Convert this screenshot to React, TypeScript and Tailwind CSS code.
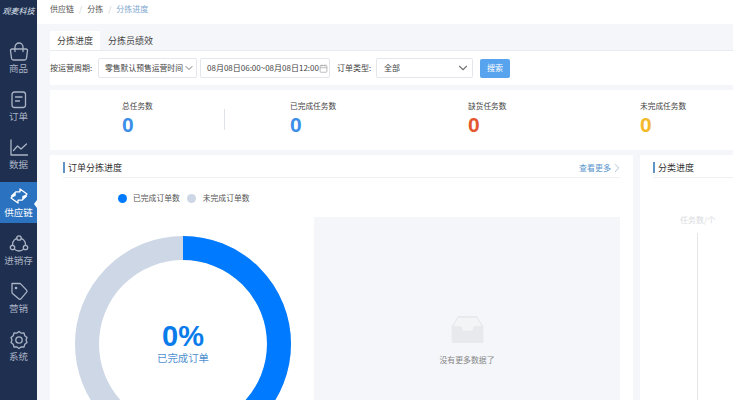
import React from "react";
import { ChevronDown, ChevronRight, Calendar } from "lucide-react";

const font = "font-['Noto_Sans_CJK_SC','Liberation_Sans',sans-serif]";

const icons: Record<string, React.ReactNode> = {
  goods: (
    <>
      <path d="M3 7h14a1.5 1.5 0 0 1 1.5 1.7l-1 7.5a2 2 0 0 1-2 1.8H4.5a2 2 0 0 1-2-1.8l-1-7.5A1.5 1.5 0 0 1 3 7z" />
      <path d="M6 9.5V5a4 4 0 0 1 8 0v4.5" />
    </>
  ),
  order: (
    <>
      <rect x="3" y="2" width="13.5" height="15.5" rx="2.5" />
      <path d="M6.5 7h6.5M6.5 11h4" />
    </>
  ),
  data: (
    <>
      <path d="M2 2v15h16.5" />
      <path d="M4.5 12.5l4-4.5 3.5 3 5.5-5" />
    </>
  ),
  supply: (
    <>
      <path d="M6 9.5L2.5 10 7 5.8h4V3l7 5-4.5 4" />
      <path d="M14 10.5l3.5-.5-4.5 4.2H9V17l-7-5 4.5-4" />
    </>
  ),
  stock: (
    <>
      <circle cx="10" cy="10.5" r="6.5" />
      <circle cx="10" cy="4" r="2.2" fill="#1f2f50" />
      <circle cx="3.5" cy="13.5" r="2.2" fill="#1f2f50" />
      <circle cx="16.5" cy="13.5" r="2.2" fill="#1f2f50" />
    </>
  ),
  market: (
    <>
      <path d="M3 1.5h7.5a2 2 0 0 1 1.4.6l5.7 6a1.5 1.5 0 0 1 0 2l-5.7 6.7a1.5 1.5 0 0 1-2.2 0L3.5 11.5a2 2 0 0 1-.5-1.3z" />
      <circle cx="7" cy="6" r="0.7" fill="currentColor" />
    </>
  ),
  system: (
    <>
      <path d="M10 1.5l2.3 1.7 2.7-.2.8 2.7L18 7.5 17 10l1 2.5-2.2 1.8-.8 2.7-2.7-.2L10 18.5l-2.3-1.7-2.7.2-.8-2.7L2 12.5 3 10 2 7.5l2.2-1.8L5 3l2.7.2z" />
      <circle cx="10" cy="10" r="3.2" />
    </>
  ),
};

const nav = [
  { key: "goods", label: "商品" },
  { key: "order", label: "订单" },
  { key: "data", label: "数据" },
  { key: "supply", label: "供应链", active: true },
  { key: "stock", label: "进销存" },
  { key: "market", label: "营销" },
  { key: "system", label: "系统" },
];

const stats = [
  { label: "总任务数", color: "text-[#3b8fe8]", pl: "pl-[72px]" },
  { label: "已完成任务数", color: "text-[#3b8fe8]", pl: "pl-[65px]" },
  { label: "缺货任务数", color: "text-[#e4572e]", pl: "pl-[68px]" },
  { label: "未完成任务数", color: "text-[#f4b92a]", pl: "pl-[65px]" },
];

function CardTitle({ title, right }: { title: string; right?: React.ReactNode }) {
  return (
    <div className="mx-[13px] flex h-[23px] items-start justify-between border-b border-[#eef0f4] pt-[7px]">
      <div className="flex items-center gap-[3px] text-[9px] leading-[11px] text-[#333]">
        <span className="h-[11px] w-[2px] bg-[#5f93c4]" />
        {title}
      </div>
      {right}
    </div>
  );
}

export default function App() {
  return (
    <div className={`${font} flex h-[400px] w-[733px] overflow-hidden bg-[#f4f6fa]`}>
      <aside className="flex h-full w-[37px] shrink-0 flex-col bg-[#1f2f50]">
        <div className="flex h-[22px] items-center justify-center whitespace-nowrap text-[8px] italic text-[#dfe5ee]">
          观麦科技
        </div>
        <div className="mt-[16px] flex flex-col gap-[7px]">
          {nav.map((n) => (
            <div
              key={n.key}
              className={`relative flex h-[41px] flex-col items-center pt-[4px] ${
                n.active ? "bg-[#2b72c0] text-white" : "text-[#aab4c4]"
              }`}
            >
              <svg
                viewBox="0 0 20 20"
                className="h-[20px] w-[20px]"
                fill="none"
                stroke="currentColor"
                strokeWidth="1.3"
                strokeLinejoin="round"
                strokeLinecap="round"
              >
                {icons[n.key]}
              </svg>
              <span className="whitespace-nowrap text-[9.5px] leading-[12px]">{n.label}</span>
              {n.active && (
                <span className="absolute right-0 top-[18px] h-0 w-0 border-y-[4px] border-r-[3px] border-y-transparent border-r-white" />
              )}
            </div>
          ))}
        </div>
      </aside>

      <main className="min-w-0 flex-1">
        <div className="flex h-[24px] items-center gap-[5px] bg-white pb-[6px] pl-[13px] text-[8px] text-[#555]">
          <span>供应链</span>
          <span className="text-[#ccc]">/</span>
          <span>分拣</span>
          <span className="text-[#ccc]">/</span>
          <span className="text-[#7fa8cf]">分拣进度</span>
        </div>

        <div className="w-[720px] pl-[13px]">
          <div className="flex h-[27px] items-end border-b border-[#e8ebf0]">
            <div className="flex h-[19px] w-[50px] items-center justify-center bg-white text-[9px] text-[#444]">
              分拣进度
            </div>
            <div className="flex h-[19px] items-center pl-[8px] text-[9px] text-[#444]">
              分拣员绩效
            </div>
          </div>

          <div className="flex h-[34px] items-center bg-white text-[8px] text-[#444]">
            <span className="w-[48px] whitespace-nowrap">按运营周期:</span>
            <div className="flex h-[20px] w-[99px] items-center justify-between rounded-[2px] border border-[#e3e6eb] pl-[6px] pr-[1px]">
              <span className="whitespace-nowrap text-[7.8px]">零售默认预售运营时间</span>
              <ChevronDown className="h-[12px] w-[12px] shrink-0 text-[#777]" />
            </div>
            <div className="ml-[3px] flex h-[20px] w-[130px] items-center justify-between rounded-[2px] border border-[#e3e6eb] pl-[6px] pr-[2px]">
              <span className="whitespace-nowrap text-[8px]">08月08日06:00~08月08日12:00</span>
              <Calendar className="h-[9px] w-[9px] shrink-0 text-[#aaa]" />
            </div>
            <span className="ml-[7px] w-[39px] whitespace-nowrap">订单类型:</span>
            <div className="flex h-[20px] w-[97px] items-center justify-between rounded-[2px] border border-[#e3e6eb] pl-[7px] pr-[2px]">
              <span>全部</span>
              <ChevronDown className="h-[14px] w-[14px] text-[#777]" />
            </div>
            <div className="ml-[7px] flex h-[19px] w-[30px] items-center justify-center rounded-[2px] bg-[#58a3ee] text-[8px] text-white">
              搜索
            </div>
          </div>

          <div className="mt-[5px] flex h-[60px] bg-white">
            {stats.map((s, i) => (
              <div key={s.label} className={`relative w-[175px] ${s.pl} pt-[10px]`}>
                <div className="whitespace-nowrap text-[7.7px] leading-[12px] text-[#444]">{s.label}</div>
                <div className={`mt-[1px] font-['Liberation_Sans',sans-serif] text-[21px] font-bold leading-[24px] ${s.color}`}>0</div>
                {i === 0 && <span className="absolute right-0 top-[19px] h-[21px] w-px bg-[#dfe2e7]" />}
              </div>
            ))}
          </div>

          <div className="mt-[5px] flex gap-[7px]">
            <section className="h-[260px] w-[583px] shrink-0 bg-white">
              <CardTitle
                title="订单分拣进度"
                right={
                  <div className="-mr-[4px] flex items-center text-[8px] leading-[11px] text-[#5b96cc]">
                    查看更多
                    <ChevronRight strokeWidth={1.2} className="-ml-[1px] h-[14px] w-[14px] -my-[2px] text-[#8ab]" />
                  </div>
                }
              />
              <div className="mt-[14px] flex h-[12px] items-center pl-[68px] text-[7.8px] text-[#555]">
                <span className="h-[9px] w-[9px] rounded-full bg-[#007bff]" />
                <span className="ml-[6px]">已完成订单数</span>
                <span className="ml-[7px] h-[9px] w-[9px] rounded-full bg-[#cdd7e6]" />
                <span className="ml-[7px]">未完成订单数</span>
              </div>

              <div className="mt-[13px] flex pl-[25px]">
                <div className="relative mt-[19px] h-[216px] w-[216px] shrink-0">
                  <svg viewBox="0 0 216 216" className="h-[216px] w-[216px]">
                    <circle cx="108" cy="108" r="96" fill="none" stroke="#cdd7e6" strokeWidth="24" />
                    <path d="M108 12a96 96 0 0 1 0 192" fill="none" stroke="#007bff" strokeWidth="24" />
                  </svg>
                  <div className="absolute inset-x-0 top-[84px] flex flex-col items-center">
                    <span className="font-['Liberation_Sans',sans-serif] text-[29px] font-bold leading-[32px] text-[#0a7bea]">0%</span>
                    <span className="text-[10.4px] leading-[12px] text-[#4f91cf]">已完成订单</span>
                  </div>
                </div>
                <div className="ml-[23px] flex h-[190px] w-[306px] flex-col items-center bg-[#f4f6fa] pt-[98px]">
                  <svg viewBox="0 0 36 30" className="h-[28px] w-[35px]">
                    <path d="M8 1h20l7 11v16a2 2 0 0 1-2 2H3a2 2 0 0 1-2-2V12z" fill="#e8e9ec" />
                    <path d="M8 3h20l5 9h-8l-2 5H13l-2-5H3z" fill="#f3f4f6" />
                  </svg>
                  <span className="mt-[11px] text-[7.9px] leading-[11px] text-[#888]">没有更多数据了</span>
                </div>
              </div>
            </section>

            <section className="h-[260px] flex-1 bg-white">
              <CardTitle title="分类进度" />
              <div className="pl-[40px] pt-[36px] text-[8px] leading-[11px] text-[#d9dbe0]">任务数/个</div>
              <div className="ml-[57px] mt-[8px] h-[170px] w-px bg-[#e3e5e9]" />
            </section>
          </div>
        </div>
      </main>
    </div>
  );
}
